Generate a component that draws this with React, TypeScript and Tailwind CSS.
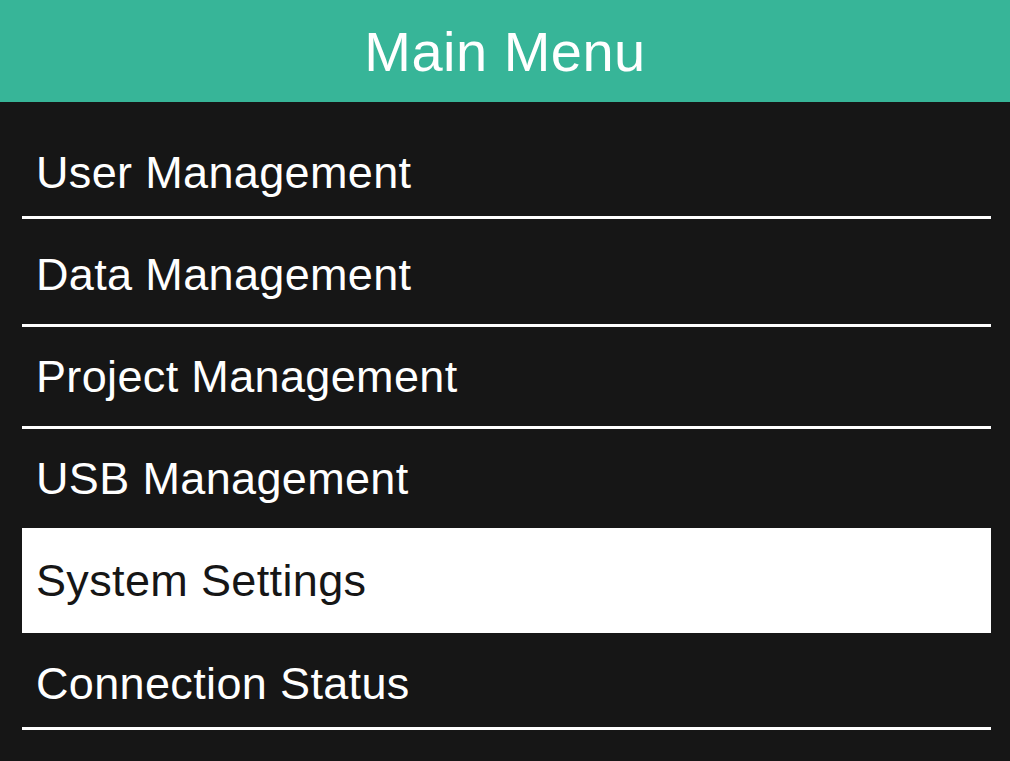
import React from 'react';

const items = [
  { label: 'User Management', h: 'h-[88px]', pad: '', line: true },
  { label: 'Data Management', h: 'h-[105px]', pad: 'pt-[5px]', line: true },
  { label: 'Project Management', h: 'h-[99px]', pad: '', line: true },
  { label: 'USB Management', h: 'h-[99px]', pad: '', line: false },
  { label: 'System Settings', h: 'h-[105px]', pad: '', line: false, active: true },
  { label: 'Connection Status', h: 'h-[94px]', pad: 'pt-[7px]', line: true },
];

export default function App() {
  return (
    <div className="w-[1010px] h-[761px] bg-[#161616] overflow-hidden font-['Liberation_Sans',Arial,sans-serif]">
      {/* Header */}
      <div className="h-[102px] bg-[#37b598] flex items-center justify-center">
        <h1 className="text-white text-[56px] leading-none pt-[1px] tracking-[0.5px]">Main Menu</h1>
      </div>

      {/* Menu list */}
      <div className="pl-[22px] pr-[19px] pt-[26px]">
        {items.map(item => (
          <div key={item.label}>
            <div
              className={`${item.h} ${item.pad} flex items-center pl-[14px] ${item.active ? 'bg-white text-[#161616]' : 'text-white'}`}
            >
              <span className="text-[45px] leading-none tracking-[0.35px]">{item.label}</span>
            </div>
            {item.line && <div className="h-[3px] bg-white" />}
          </div>
        ))}
      </div>
    </div>
  );
}
